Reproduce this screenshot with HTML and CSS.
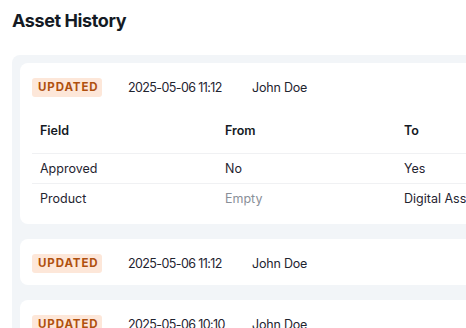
FILE: index.html
```html
<!DOCTYPE html>
<html lang="en">
<head>
<meta charset="utf-8">
<title>Asset History</title>
<link rel="stylesheet" href="styles.css">
</head>
<body>
<main class="page">
  <h1 class="title">Asset History</h1>
  <section class="history">
    <article class="entry">
      <header class="entry-head">
        <span class="badge">Updated</span>
        <span class="date">2025-05-06 11:12</span>
        <span class="user">John Doe</span>
      </header>
      <table class="changes">
        <thead>
          <tr><th class="c-field">Field</th><th class="c-from">From</th><th class="c-to">To</th></tr>
        </thead>
        <tbody>
          <tr><td>Approved</td><td>No</td><td>Yes</td></tr>
          <tr><td>Product</td><td class="empty">Empty</td><td>Digital Asset Management</td></tr>
        </tbody>
      </table>
    </article>
    <article class="entry">
      <header class="entry-head">
        <span class="badge">Updated</span>
        <span class="date">2025-05-06 11:12</span>
        <span class="user">John Doe</span>
      </header>
    </article>
    <article class="entry">
      <header class="entry-head">
        <span class="badge">Updated</span>
        <span class="date">2025-05-06 10:10</span>
        <span class="user">John Doe</span>
      </header>
    </article>
  </section>
</main>
</body>
</html>
```
FILE: styles.css
```css
* { box-sizing: border-box; }
html, body { margin: 0; padding: 0; background: #ffffff; overflow: hidden; }
body {
  font-family: Inter, "Noto Sans", "Liberation Sans", sans-serif;
  color: #1f2430;
}
.page { padding: 9px 12px; width: 640px; }
.title {
  margin: 0 0 22px;
  font-size: 18px;
  line-height: 24px;
  font-weight: 700;
  color: #141a24;
  letter-spacing: -0.4px;
}
.history {
  background: #f2f5f8;
  border-radius: 8px;
  padding: 8px;
  display: flex;
  flex-direction: column;
  gap: 15px;
}
.entry {
  background: #ffffff;
  border-radius: 8px;
  padding: 15px 12px 12px;
}
.entry-head {
  display: flex;
  align-items: center;
  height: 19px;
  font-size: 12.5px;
}
.badge {
  background: #fde7d9;
  color: #b0500e;
  font-weight: 700;
  font-size: 11.5px;
  letter-spacing: 0.9px;
  text-transform: uppercase;
  border-radius: 3px;
  height: 19px;
  line-height: 19px;
  padding: 0 6px;
  width: 70px;
  text-align: center;
}
.date { margin-left: 26px; width: 124px; color: #1f2430; letter-spacing: -0.6px; }
.user { color: #1f2430; letter-spacing: -0.2px; }
.changes {
  margin-top: 14px;
  width: 100%;
  border-collapse: collapse;
  font-size: 12.5px;
  table-layout: fixed;
}
.c-field { width: 185px; }
.c-from { width: 179px; }
.changes th {
  text-align: left;
  font-weight: 600;
  color: #141a24;
  padding: 12px 8px 14px;
  line-height: 16px;
  border-bottom: 1px solid #f0f1f3;
}
.changes td {
  padding: 6px 8px;
  line-height: 17px;
  white-space: nowrap;
  overflow: hidden;
  border-bottom: 1px solid #f0f1f3;
}
.changes tbody tr:last-child td { border-bottom: none; padding-bottom: 5px; }
.changes td.empty { color: #8a8f98; }
```
